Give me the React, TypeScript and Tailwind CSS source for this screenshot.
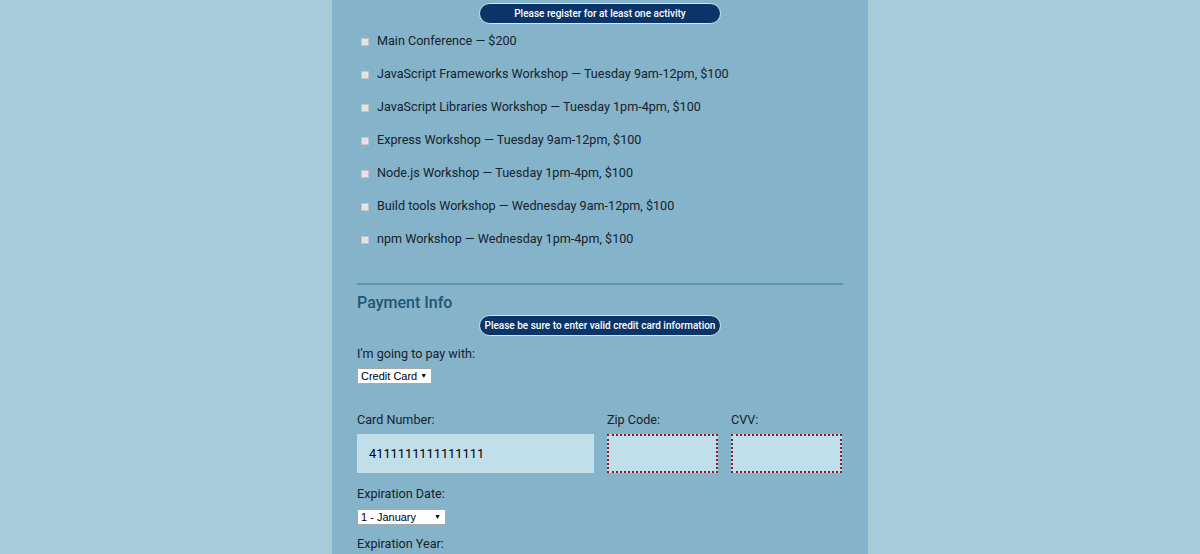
const activities = [
  "Main Conference — $200",
  "JavaScript Frameworks Workshop — Tuesday 9am-12pm, $100",
  "JavaScript Libraries Workshop — Tuesday 1pm-4pm, $100",
  "Express Workshop — Tuesday 9am-12pm, $100",
  "Node.js Workshop — Tuesday 1pm-4pm, $100",
  "Build tools Workshop — Wednesday 9am-12pm, $100",
  "npm Workshop — Wednesday 1pm-4pm, $100",
];

function Notice({ text }: { text: string }) {
  return (
    <div className="flex justify-center">
      <div className="w-[242px] whitespace-nowrap rounded-full border border-[#d7e6ee] bg-[#0b3468] text-center font-['Roboto',sans-serif] text-[10px] font-medium leading-[19px] text-white">
        {text}
      </div>
    </div>
  );
}

function FakeSelect({ label, width }: { label: string; width: string }) {
  return (
    <div
      className={`flex h-[16px] items-center justify-between gap-[3px] whitespace-nowrap border border-[#a9a9a9] bg-white pl-[3px] pr-[4px] font-['Liberation_Sans',Arial,sans-serif] text-[11px] text-black ${width}`}
    >
      <span>{label}</span>
      <span className="text-[7px]">▼</span>
    </div>
  );
}

export default function App() {
  return (
    <div className="flex h-[554px] justify-center overflow-hidden bg-[#a9cad8] font-['Roboto',sans-serif] text-[#16222d]">
      <div className="w-[536px] bg-[#85b3c9] px-[25px] pt-[3px]">
        <Notice text="Please register for at least one activity" />
        <div className="mt-[1px] flex flex-col">
          {activities.map((a) => (
            <label key={a} className="flex h-[33px] items-center gap-[8px] pl-[4px] text-[12.6px]">
              <span className="h-[8px] w-[8px] border border-[#c4c4c4] bg-[#e4e4e4]" />
              <span>{a}</span>
            </label>
          ))}
        </div>
        <div className="mt-[27px] h-[2px] bg-[#5f94ae]" />
        <h2 className="mt-[8px] text-[16px] font-medium leading-[20px] text-[#1f5675]">Payment Info</h2>
        <div className="mt-[2px]">
          <Notice text="Please be sure to enter valid credit card information" />
        </div>
        <p className="mt-[8px] text-[12.6px] leading-[20px]">I'm going to pay with:</p>
        <div className="mt-[4px] flex">
          <FakeSelect label="Credit Card" width="w-auto" />
        </div>
        <div className="mt-[26px] flex gap-[13px]">
          <div className="w-[237px]">
            <p className="text-[12.6px] leading-[20px]">Card Number:</p>
            <div className="mt-[4px] flex h-[39px] items-center bg-[#c1dfea] px-[12px] text-[12.8px] text-black">
              4111111111111111
            </div>
          </div>
          <div className="w-[111px]">
            <p className="text-[12.6px] leading-[20px]">Zip Code:</p>
            <div className="mt-[4px] h-[39px] border-2 border-dotted border-[#8b1a2c] bg-[#c1dfea]" />
          </div>
          <div className="w-[111px]">
            <p className="text-[12.6px] leading-[20px]">CVV:</p>
            <div className="mt-[4px] h-[39px] border-2 border-dotted border-[#8b1a2c] bg-[#c1dfea]" />
          </div>
        </div>
        <p className="mt-[11px] text-[12.6px] leading-[20px]">Expiration Date:</p>
        <div className="mt-[5px]">
          <FakeSelect label="1 - January" width="w-[89px]" />
        </div>
        <p className="mt-[9px] text-[12.6px] leading-[20px]">Expiration Year:</p>
      </div>
    </div>
  );
}
